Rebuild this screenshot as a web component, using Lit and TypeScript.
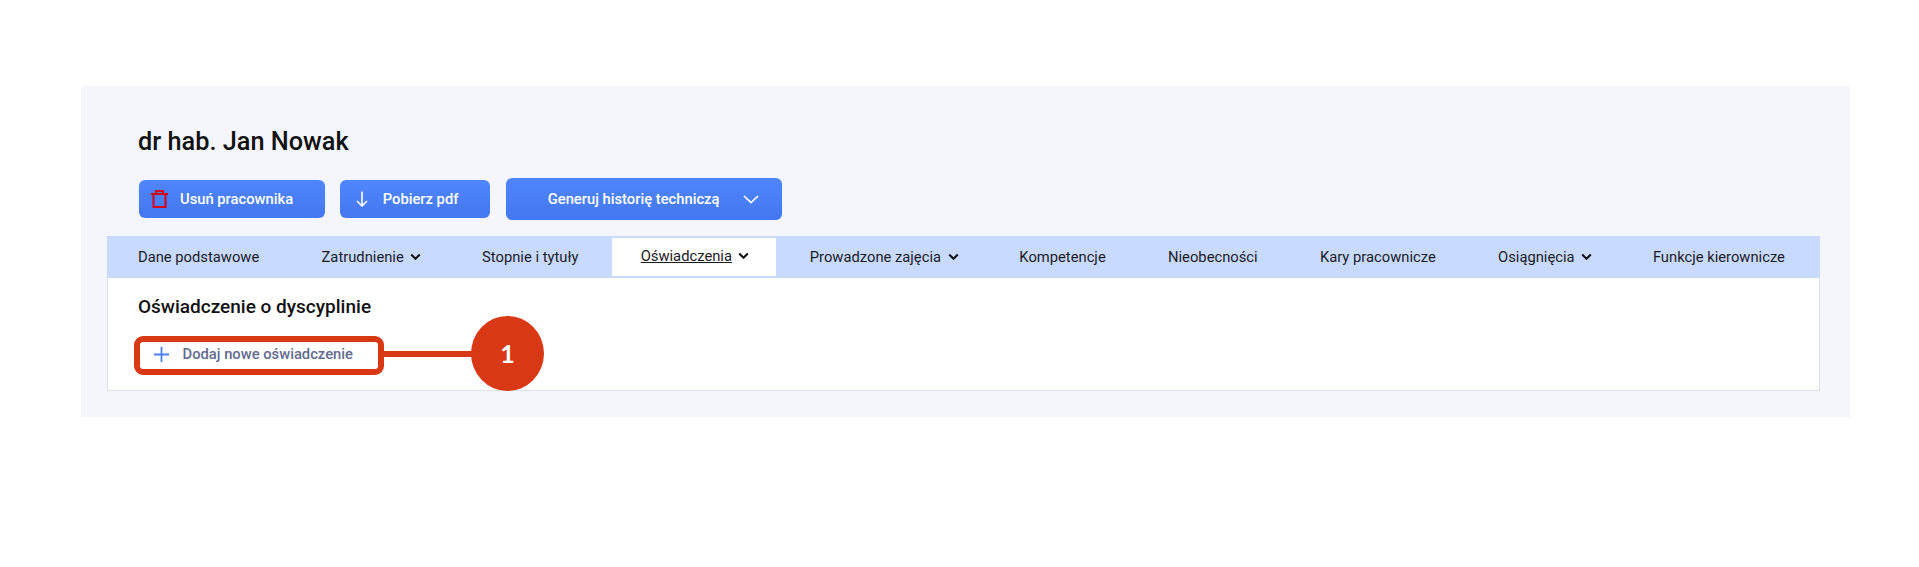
import { LitElement, html, css } from "lit";
import { customElement } from "lit/decorators.js";

const chev = html`<svg class="chev" viewBox="0 0 11 8" width="11" height="8"><path d="M1.2 1.5 5.5 5.8l4.3-4.3" fill="none" stroke="#111" stroke-width="2.1"/></svg>`;

const tabs: [string, boolean, boolean][] = [
  ["Dane podstawowe", false, false],
  ["Zatrudnienie", true, false],
  ["Stopnie i tytuły", false, false],
  ["Oświadczenia", true, true],
  ["Prowadzone zajęcia", true, false],
  ["Kompetencje", false, false],
  ["Nieobecności", false, false],
  ["Kary pracownicze", false, false],
  ["Osiągnięcia", true, false],
  ["Funkcje kierownicze", false, false],
];

@customElement("app-root")
export class AppRoot extends LitElement {
  static styles = css`
    :host { display: block; height: 567px; background: #fff; font-family: Roboto, sans-serif; padding-top: 86px; box-sizing: border-box; }
    .panel { margin-left: 81px; width: 1769px; height: 331px; background: #f4f6fb; box-sizing: border-box; padding: 40px 0 0 26px; }
    h1 { margin: 0 0 0 31px; font-size: 25.3px; font-weight: 500; line-height: 32px; color: #111; }
    .actions { display: flex; align-items: center; margin: 20px 0 0 32px; height: 42px; }
    .btn { display: flex; align-items: center; height: 38px; box-sizing: border-box; border-radius: 6px; background: linear-gradient(#4f86fd, #4477f0); color: #fff; font-size: 14.75px; font-weight: 500; white-space: nowrap; }
    .btn.del { width: 186px; padding-left: 11.7px; gap: 12.3px; }
    .btn.pdf { width: 150px; margin-left: 15px; padding-left: 15.7px; gap: 15px; }
    .btn.gen { width: 276px; height: 42px; margin-left: 16px; padding-left: 41.7px; gap: 24px; }
    .tabs { display: flex; align-items: stretch; justify-content: space-between; width: 1713px; height: 42px; margin-top: 16px; background: #c8daff; box-sizing: border-box; padding: 0 4px 0 0; }
    .tab { display: flex; align-items: center; gap: 6.5px; padding: 0 31px 1px; font-size: 14.75px; color: #1b1b1f; white-space: nowrap; }
    .tab.has-chev { padding-right: 29.5px; }
    .tab.active { background: #fff; margin: 2px 2px 2px 2px; padding: 0 27px 3px 29px; }
    .tab.active span { text-decoration: underline; }
    .card { width: 1713px; height: 113px; background: #fff; border: 1px solid #dde1ea; border-top: none; box-sizing: border-box; padding: 17px 30px 0; }
    h2 { margin: 0; font-size: 19px; font-weight: 500; line-height: 24px; color: #111; }
    .add { position: relative; display: flex; align-items: center; gap: 13.5px; height: 24px; margin-top: 23px; padding-left: 16px; width: 246px; box-sizing: border-box; font-size: 14.75px; font-weight: 500; color: #646b90; white-space: nowrap; }
    .callout { position: absolute; left: -4px; top: -6px; width: 250px; height: 39px; box-sizing: border-box; border: 6px solid #d93815; border-radius: 9px; }
    .line { position: absolute; left: 246px; top: 9px; width: 88px; height: 6px; background: #d93815; }
    .badge { position: absolute; left: 333px; top: -26px; width: 73px; height: 75px; padding-bottom: 2px; box-sizing: border-box; border-radius: 50%; background: #d93815; color: #fff; display: flex; align-items: center; justify-content: center; font-family: Lato, sans-serif; font-weight: 700; font-size: 25px; }
  `;
  render() {
    return html`<div class="panel">
      <h1>dr hab. Jan Nowak</h1>
      <div class="actions">
        <div class="btn del">
          <svg width="17" height="18" viewBox="0 0 17 18"><path d="M0 4h17M2.5 4v13h12V4M5 4V1h7v3" fill="none" stroke="#d90015" stroke-width="2"/></svg>
          <span>Usuń pracownika</span>
        </div>
        <div class="btn pdf">
          <svg width="12" height="16" viewBox="0 0 12 16"><path d="M6 .5v14.5M1 10l5 5 5-5" fill="none" stroke="#fff" stroke-width="1.6"/></svg>
          <span>Pobierz pdf</span>
        </div>
        <div class="btn gen">
          <span>Generuj historię techniczą</span>
          <svg width="16" height="9" viewBox="0 0 16 9"><path d="M1 1l7 6.5L15 1" fill="none" stroke="#fff" stroke-width="1.7"/></svg>
        </div>
      </div>
      <div class="tabs">
        ${tabs.map(([t, c, a]) => html`<div class="tab ${a ? "active" : ""} ${c ? "has-chev" : ""}"><span>${t}</span>${c ? chev : ""}</div>`)}
      </div>
      <div class="card">
        <h2>Oświadczenie o dyscyplinie</h2>
        <div class="add">
          <svg width="15" height="15" viewBox="0 0 15 15"><path d="M7.5 0v15M0 7.5h15" stroke="#4a80f5" stroke-width="1.8"/></svg>
          <span>Dodaj nowe oświadczenie</span>
          <div class="callout"></div>
          <div class="line"></div>
          <div class="badge">1</div>
        </div>
      </div>
    </div>`;
  }
}
